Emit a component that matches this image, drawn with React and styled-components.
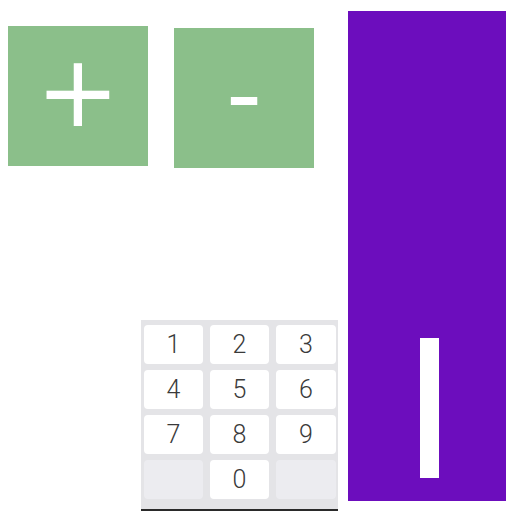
import React from "react";
import styled, { createGlobalStyle } from "styled-components";

const Global = createGlobalStyle`
  html, body { margin: 0; padding: 0; background: #ffffff; }
  body { font-family: Roboto, "Liberation Sans", sans-serif; }
`;

const Page = styled.div`
  display: flex;
  width: 512px;
  height: 512px;
  overflow: hidden;
`;

const LeftArea = styled.div`
  width: 348px;
  display: flex;
  flex-direction: column;
`;

const ButtonRow = styled.div`
  display: flex;
  align-items: flex-start;
  gap: 26px;
  padding: 26px 0 0 8px;
`;

const SquareButton = styled.div`
  width: 140px;
  height: 140px;
  box-sizing: border-box;
  padding-bottom: 8px;
  margin-top: ${(p) => p.$offset || 0}px;
  background: #8bbf8a;
  color: #ffffff;
  display: flex;
  align-items: center;
  justify-content: center;
  font-family: "DejaVu Sans", sans-serif;
  font-size: 100px;
  line-height: 1;
  user-select: none;
`;

const Keypad = styled.div`
  margin: 152px 0 0 141px;
  width: 197px;
  height: 191px;
  box-sizing: border-box;
  background: #e4e4e7;
  border-bottom: 2px solid #2a2a2a;
  padding: 5px 1px 0 3px;
  display: grid;
  grid-template-columns: 59px 59px 60px;
  grid-auto-rows: 39px;
  column-gap: 7px;
  row-gap: 6px;
`;

const Key = styled.div`
  background: ${(p) => (p.$blank ? "#ececf0" : "#ffffff")};
  border-radius: 4px;
  display: flex;
  align-items: center;
  justify-content: center;
  font-family: Roboto, "Liberation Sans", sans-serif;
  font-weight: 300;
  font-size: 25px;
  color: #3a3a3a;
`;

const Panel = styled.div`
  margin-top: 11px;
  width: 158px;
  height: 490px;
  background: #6c0dbd;
  display: flex;
  flex-direction: column;
  justify-content: flex-end;
  align-items: flex-start;
  padding: 0 0 23px 72px;
  box-sizing: border-box;
`;

const Bar = styled.div`
  width: 19px;
  height: 140px;
  background: #ffffff;
`;

const keys = ["1", "2", "3", "4", "5", "6", "7", "8", "9", "", "0", ""];

export default function App() {
  return (
    <>
      <Global />
      <Page>
        <LeftArea>
          <ButtonRow>
            <SquareButton>+</SquareButton>
            <SquareButton $offset={2}>-</SquareButton>
          </ButtonRow>
          <Keypad>
            {keys.map((k, i) => (
              <Key key={i} $blank={k === ""}>
                {k}
              </Key>
            ))}
          </Keypad>
        </LeftArea>
        <Panel>
          <Bar />
        </Panel>
      </Page>
    </>
  );
}
